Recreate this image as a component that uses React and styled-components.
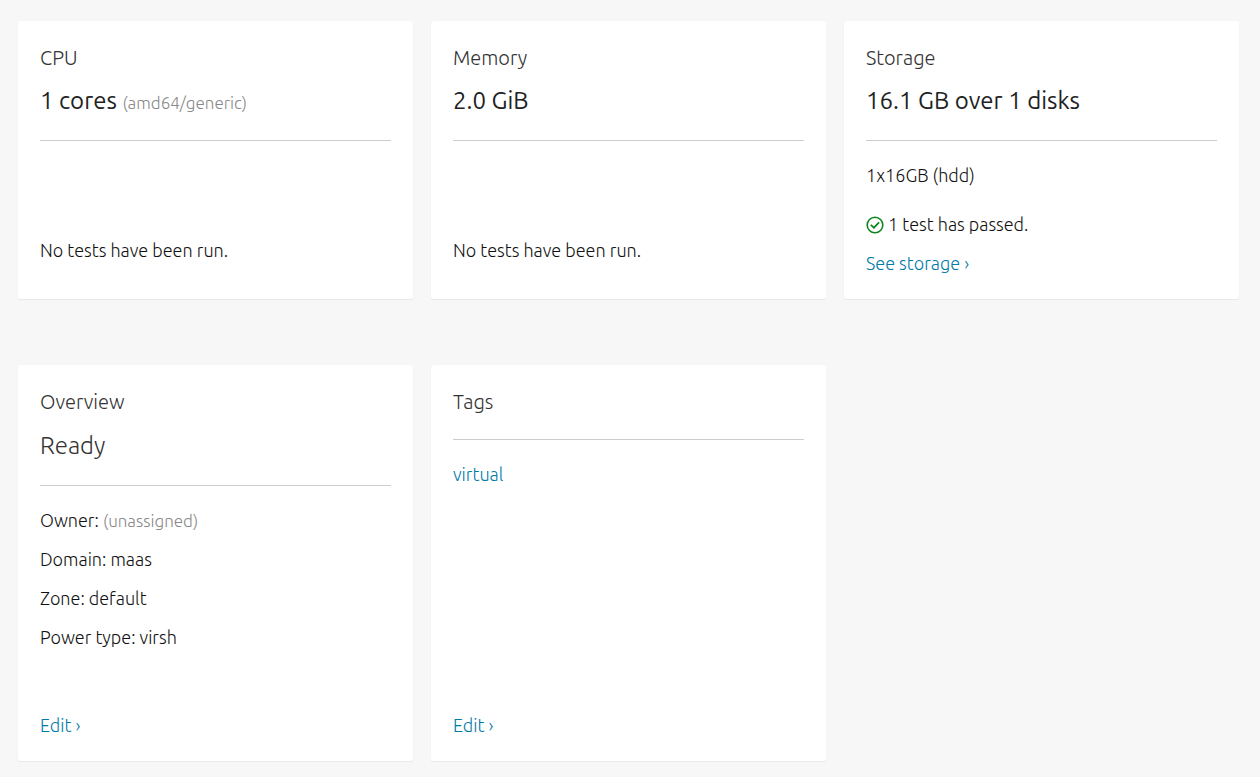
import React from "react";
import styled, { createGlobalStyle } from "styled-components";

const GlobalStyle = createGlobalStyle`
  * { box-sizing: border-box; }
  body {
    margin: 0;
    background: #f7f7f7;
    color: #111;
    font-family: Ubuntu, "Open Sans", "Noto Sans", sans-serif;
    font-size: 18px;
    font-weight: 300;
    line-height: 25px;
  }
`;

const Page = styled.main`
  display: flex;
  flex-direction: column;
  gap: 66px;
  padding: 21px 21px 16px 18px;
`;

const CardRow = styled.section`
  display: grid;
  grid-template-columns: repeat(3, minmax(0, 1fr));
  gap: 18px;
`;

const Card = styled.article`
  display: flex;
  flex-direction: column;
  min-height: ${({ $tall }) => ($tall ? 396 : 278)}px;
  padding: 23px 22px;
  background: #fff;
  border-radius: 2px;
  box-shadow: 0 1px 1px rgba(0, 0, 0, 0.06), 0 0 1px rgba(0, 0, 0, 0.06);
`;

const CardHeader = styled.header`
  display: flex;
  flex-direction: column;
  gap: 13px;
  padding-bottom: 23px;
  border-bottom: 1px solid #cdcdcd;
`;

const Title = styled.h2`
  margin: 0;
  color: #333;
  font-size: 20px;
  font-weight: 300;
  line-height: 28px;
`;

const Value = styled.p`
  margin: 0;
  color: ${({ $light }) => ($light ? "#333" : "#222")};
  font-size: 24px;
  font-weight: ${({ $light }) => ($light ? 300 : 400)};
  line-height: ${({ $light }) => ($light ? 33 : 32)}px;
`;

const Muted = styled.span`
  color: #888;
  font-size: 17px;
  font-weight: 300;
  line-height: 1;
`;

const Details = styled.ul`
  display: flex;
  flex-direction: column;
  gap: 14px;
  margin: 0;
  padding: 22px 0 0;
  list-style: none;
`;

const CardFooter = styled.footer`
  display: flex;
  flex-direction: column;
  align-items: flex-start;
  gap: 14px;
  margin-top: auto;
  padding-bottom: ${({ $spaced }) => ($spaced ? 13 : 0)}px;
`;

const TestStatus = styled.p`
  display: flex;
  align-items: center;
  gap: 4px;
  margin: 0;
`;

const Link = styled.a`
  color: #007aa6;
  text-decoration: none;
  &:hover { text-decoration: underline; }
`;

const PassedIcon = () => (
  <svg width="18" height="19" viewBox="0 -1 18 19" fill="none" stroke="#0e8420" aria-hidden="true">
    <circle cx="9" cy="9" r="7.8" strokeWidth="1.6" />
    <path d="M4.8 8.8 7.9 11.7 13.1 6.3" strokeWidth="1.7" />
  </svg>
);

export default function App() {
  return (
    <>
      <GlobalStyle />
      <Page>
        <CardRow>
          <Card>
            <CardHeader>
              <Title>CPU</Title>
              <Value>1 cores <Muted>(amd64/generic)</Muted></Value>
            </CardHeader>
            <CardFooter $spaced>
              <TestStatus>No tests have been run.</TestStatus>
            </CardFooter>
          </Card>
          <Card>
            <CardHeader>
              <Title>Memory</Title>
              <Value>2.0 GiB</Value>
            </CardHeader>
            <CardFooter $spaced>
              <TestStatus>No tests have been run.</TestStatus>
            </CardFooter>
          </Card>
          <Card>
            <CardHeader>
              <Title>Storage</Title>
              <Value>16.1 GB over 1 disks</Value>
            </CardHeader>
            <Details>
              <li>1x16GB (hdd)</li>
            </Details>
            <CardFooter>
              <TestStatus><PassedIcon />1 test has passed.</TestStatus>
              <Link href="#storage">See storage ›</Link>
            </CardFooter>
          </Card>
        </CardRow>
        <CardRow>
          <Card $tall>
            <CardHeader>
              <Title>Overview</Title>
              <Value $light>Ready</Value>
            </CardHeader>
            <Details>
              <li>Owner: <Muted>(unassigned)</Muted></li>
              <li>Domain: maas</li>
              <li>Zone: default</li>
              <li>Power type: virsh</li>
            </Details>
            <CardFooter>
              <Link href="#overview">Edit ›</Link>
            </CardFooter>
          </Card>
          <Card $tall>
            <CardHeader>
              <Title>Tags</Title>
            </CardHeader>
            <Details>
              <li><Link href="#virtual">virtual</Link></li>
            </Details>
            <CardFooter>
              <Link href="#tags">Edit ›</Link>
            </CardFooter>
          </Card>
        </CardRow>
      </Page>
    </>
  );
}
